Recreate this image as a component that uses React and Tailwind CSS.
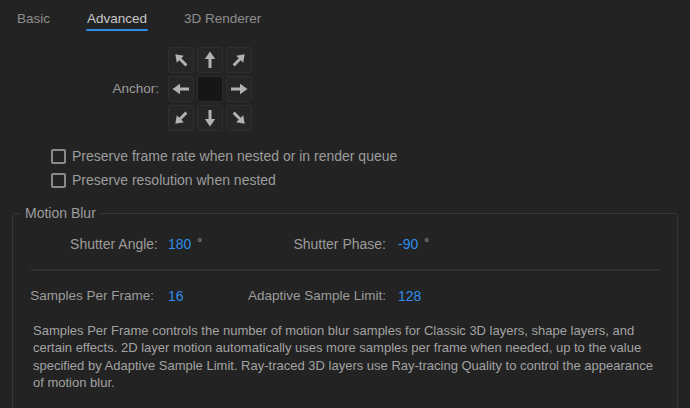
import React from 'react'

// Filled arrow used inside the anchor grid; rotated for each direction
function Arrow({ rotate = 0 }) {
  return (
    <svg width="20" height="20" viewBox="0 0 20 20" style={{ transform: `rotate(${rotate}deg)` }}>
      <polygon points="10,1.5 4.8,9 15.2,9" fill="#b2b2b2" />
      <rect x="8.5" y="8.5" width="3" height="9.5" fill="#b2b2b2" />
    </svg>
  )
}

function AnchorCell({ rotate, center }) {
  if (center) {
    return <div className="w-[26px] h-[26px] rounded-[3px] bg-[#161616] border border-[#2c2c2c]" />
  }
  const diag = rotate % 90 !== 0
  return (
    <div className="w-[26px] h-[26px] rounded-[3px] bg-[#262626] border border-[#2f2f2f] flex items-center justify-center">
      <div className={diag ? 'scale-[0.95]' : ''}>
        <Arrow rotate={rotate} />
      </div>
    </div>
  )
}

function Checkbox({ label }) {
  return (
    <div className="flex items-center gap-[6px] h-[24px]">
      <div className="w-[15px] h-[15px] rounded-[2px] border-2 border-[#8a8a8a]" />
      <span>{label}</span>
    </div>
  )
}

function Degree() {
  return <span className="ml-[6px] text-[#a8a8a8] text-[12px] relative -top-[2px]">°</span>
}

export default function App() {
  const cells = [-45, 0, 45, -90, null, 90, -135, 180, 135]

  return (
    <div
      className="w-[690px] h-[408px] overflow-hidden bg-[#232323] text-[#9c9c9c] text-[14px] leading-none"
      style={{ fontFamily: '"Liberation Sans", Arial, sans-serif' }}
    >
      {/* Tabs */}
      <div className="flex pl-[17px] pt-[12px] gap-[37px] text-[13.5px]">
        <div className="text-[#8e8e8e]">Basic</div>
        <div className="flex flex-col">
          <div className="h-[17px] text-[#c8c8c8]">Advanced</div>
          <div className="h-[2px] -mx-[1px] bg-[#2d8ceb] rounded" />
        </div>
        <div className="text-[#8e8e8e]">3D Renderer</div>
      </div>

      {/* Anchor */}
      <div className="flex items-center mt-[16px]">
        <div className="w-[159px] text-right text-[13.5px]">Anchor:</div>
        <div className="ml-[9px] grid grid-cols-[26px_26px_26px] gap-[3px]">
          {cells.map((r, i) => (
            <AnchorCell key={i} rotate={r ?? 0} center={r === null} />
          ))}
        </div>
      </div>

      {/* Checkboxes */}
      <div className="pl-[51px] mt-[13px]">
        <Checkbox label="Preserve frame rate when nested or in render queue" />
        <Checkbox label="Preserve resolution when nested" />
      </div>

      {/* Motion Blur group */}
      <fieldset className="mx-[12px] mt-[14px] border border-[#353535] rounded-[3px] h-[220px]">
        <legend className="ml-[8px] px-[4px] text-[#9c9c9c]">Motion Blur</legend>

        <div className="flex items-center mt-[14px] h-[20px]">
          <div className="w-[145px] text-right">Shutter Angle:</div>
          <div className="w-[85px] pl-[10px]">
            <span className="text-[#2f8eea]">180</span>
            <Degree />
          </div>
          <div className="w-[143px] text-right">Shutter Phase:</div>
          <div className="pl-[12px]">
            <span className="text-[#2f8eea]">-90</span>
            <Degree />
          </div>
        </div>

        <div className="mx-[18px] mt-[15px] h-[2px] bg-[#303030]" />

        <div className="flex items-center mt-[15px] h-[20px] text-[13.5px]">
          <div className="w-[141px] text-right">Samples Per Frame:</div>
          <div className="w-[89px] pl-[14px] text-[#2f8eea] text-[14px]">16</div>
          <div className="w-[143px] text-right">Adaptive Sample Limit:</div>
          <div className="pl-[12px] text-[#2f8eea] text-[14px]">128</div>
        </div>

        <p className="mt-[16px] ml-[20px] text-[13px] leading-[17.3px] text-[#a2a2a2] whitespace-nowrap">
          Samples Per Frame controls the number of motion blur samples for Classic 3D layers, shape layers, and
          <br />
          certain effects. 2D layer motion automatically uses more samples per frame when needed, up to the value
          <br />
          specified by Adaptive Sample Limit. Ray-traced 3D layers use Ray-tracing Quality to control the appearance
          <br />
          of motion blur.
        </p>
      </fieldset>
    </div>
  )
}
